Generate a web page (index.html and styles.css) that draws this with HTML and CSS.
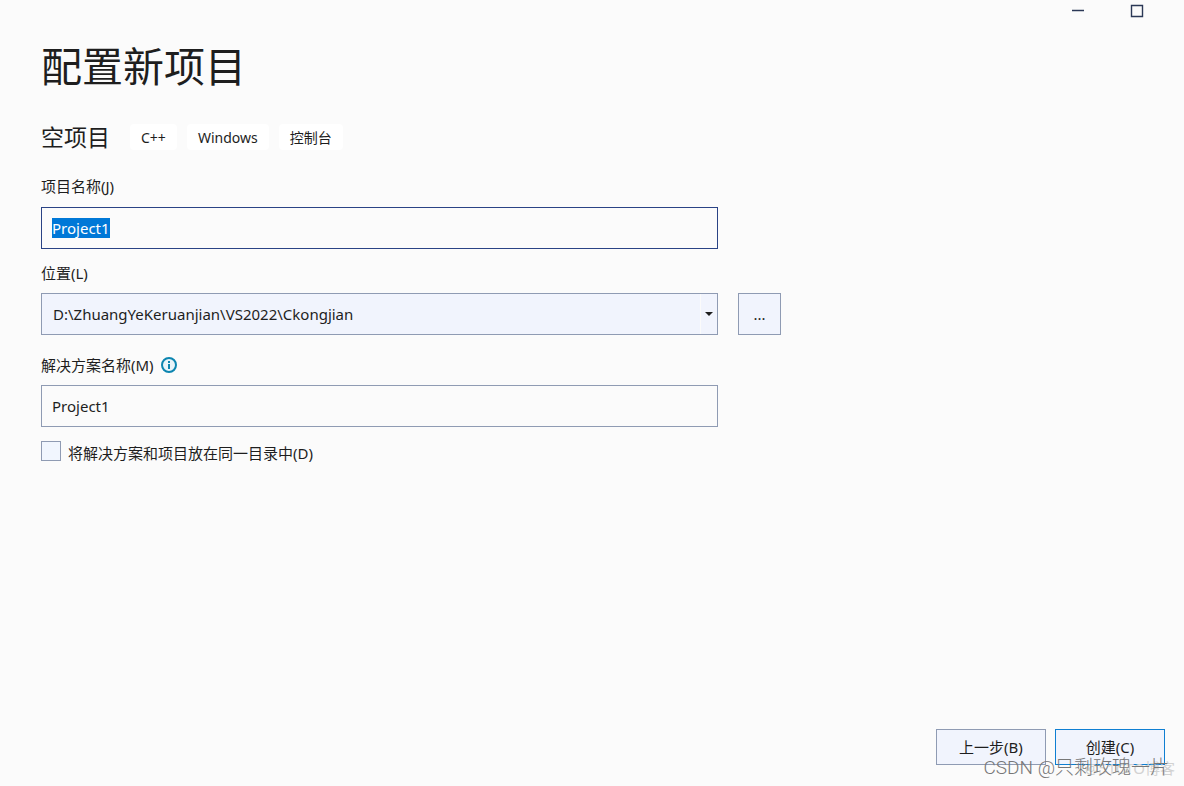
FILE: index.html
```
<!DOCTYPE html>
<html lang="zh-CN">
<head>
<meta charset="utf-8">
<title>配置新项目</title>
<link rel="stylesheet" href="styles.css">
</head>
<body>
<div class="window">
  <header class="titlebar">
    <button class="winbtn" aria-label="最小化"><svg width="14" height="14" viewBox="0 0 14 14"><path d="M1 6.5h12" stroke="#2b3856" stroke-width="1.5"/></svg></button>
    <button class="winbtn" aria-label="最大化"><svg width="14" height="14" viewBox="0 0 14 14"><path d="M1.5 1.5h11v11h-11z" fill="none" stroke="#2b3856" stroke-width="1.4"/></svg></button>
  </header>
  <main class="content">
    <h1 class="title">配置新项目</h1>
    <div class="template">
      <h2 class="template-name">空项目</h2>
      <span class="tag">C++</span>
      <span class="tag">Windows</span>
      <span class="tag">控制台</span>
    </div>
    <form class="form">
      <label class="label" for="name">项目名称(J)</label>
      <input class="field field-active" id="name" type="text" value="Project1" autocomplete="off" spellcheck="false">
      <label class="label" for="location">位置(L)</label>
      <div class="combo">
        <select class="field select" id="location"><option>D:\ZhuangYeKeruanjian\VS2022\Ckongjian</option></select>
        <span class="combo-arrow"><svg width="8" height="4" viewBox="0 0 8 4"><path d="M0 0h8L4 4z" fill="#1e1e1e"/></svg></span>
      </div>
      <button class="browse" type="button" aria-label="浏览">...</button>
      <div class="label label-info">
        <label for="solution">解决方案名称(M)</label>
        <svg width="16" height="16" viewBox="0 0 16 16"><circle cx="8" cy="8" r="7" fill="#e8f4f9" stroke="#0c85b0" stroke-width="2"/><path d="M8 7v5M8 4v2" stroke="#0c85b0" stroke-width="2"/></svg>
      </div>
      <input class="field" id="solution" type="text" value="Project1" autocomplete="off" spellcheck="false">
      <div class="check">
        <input class="box" id="same" type="checkbox">
        <label class="check-label" for="same">将解决方案和项目放在同一目录中(D)</label>
      </div>
    </form>
  </main>
  <footer class="footer">
    <button class="action">上一步(B)</button>
    <button class="action action-primary">创建(C)</button>
  </footer>
  <span class="mark mark-back">@51CTO博客</span>
  <span class="mark mark-front">CSDN @只剩玫瑰一片</span>
</div>
<script src="main.js"></script>
</body>
</html>
```
FILE: styles.css
```
* { box-sizing: border-box; }
body {
  margin: 0;
  background: #fbfbfb;
  color: #1e1e1e;
  font: 15px/20px "Noto Sans", "Noto Sans CJK SC", sans-serif;
}
button, input, select { font: inherit; color: inherit; border-radius: 0; }
.window {
  position: relative;
  display: flex;
  flex-direction: column;
  min-height: 100vh;
}
.titlebar {
  display: flex;
  justify-content: flex-end;
  gap: 28px;
  padding-right: 32px;
}
.winbtn {
  display: grid;
  place-items: center;
  width: 31px;
  height: 22px;
  padding: 0;
  border: 0;
  background: none;
}
.content { flex: 1; padding: 14px 40px 0 41px; }
.title { margin: 0; font-size: 41px; line-height: 60px; font-weight: 400; }
.template { display: flex; align-items: center; gap: 10px; margin-top: 26px; }
.template-name { margin: 0 10px 0 0; font-size: 23px; line-height: 30px; font-weight: 400; }
.tag {
  padding: 4px 11px 2px;
  border-radius: 4px;
  background: #fff;
  font-size: 14px;
}
.form {
  display: grid;
  grid-template-columns: minmax(0, 677px) 43px;
  column-gap: 20px;
  margin-top: 24px;
}
.label { grid-column: 1; margin-bottom: 10px; }
.label:first-child { margin-bottom: 11px; }
.field {
  grid-column: 1;
  display: block;
  width: 100%;
  height: 42px;
  margin: 0 0 14px;
  padding: 0 10px;
  border: 1px solid #8f9bb3;
  outline: 0;
  background: #fbfbfb;
}
.field-active { border-color: #2a4385; }
.field::selection { background: #0078d7; color: #fff; }
.combo { position: relative; grid-column: 1; }
.select {
  appearance: none;
  padding: 0 24px 0 11px;
  background: #f1f4fd;
}
.combo-arrow {
  position: absolute;
  top: 1px;
  right: 1px;
  display: grid;
  place-items: center;
  width: 17px;
  height: 40px;
  border-left: 1px solid #fbfbfb;
  pointer-events: none;
}
.browse {
  grid-column: 2;
  height: 42px;
  padding: 0;
  border: 1px solid #8f9bb3;
  background: #f1f4fd;
}
.label-info { display: flex; align-items: center; gap: 7px; margin-top: 6px; }
.check { grid-column: 1; display: flex; align-items: flex-start; gap: 7px; }
.check-label { padding-top: 2px; }
.box {
  appearance: none;
  width: 20px;
  height: 20px;
  margin: 0;
  border: 1px solid #8f9bb3;
  background: #f1f6fe;
}
.footer { display: flex; justify-content: flex-end; gap: 9px; padding: 0 19px 21px; }
.action {
  width: 110px;
  height: 36px;
  padding: 0;
  border: 1px solid #8f9bb3;
  background: #f1f4fd;
}
.action-primary { border-color: #0f7fd2; }
.mark { position: absolute; pointer-events: none; white-space: nowrap; }
.mark-back { right: 9px; bottom: 8px; color: #d2d2d2; font-size: 15px; }
.mark-front {
  right: 15px;
  bottom: 6px;
  color: #777;
  font: 300 19px/24px Roboto, "Noto Sans CJK SC", sans-serif;
}
```
FILE: main.js
```
const nameField = document.getElementById("name");
nameField.focus();
nameField.select();
```
